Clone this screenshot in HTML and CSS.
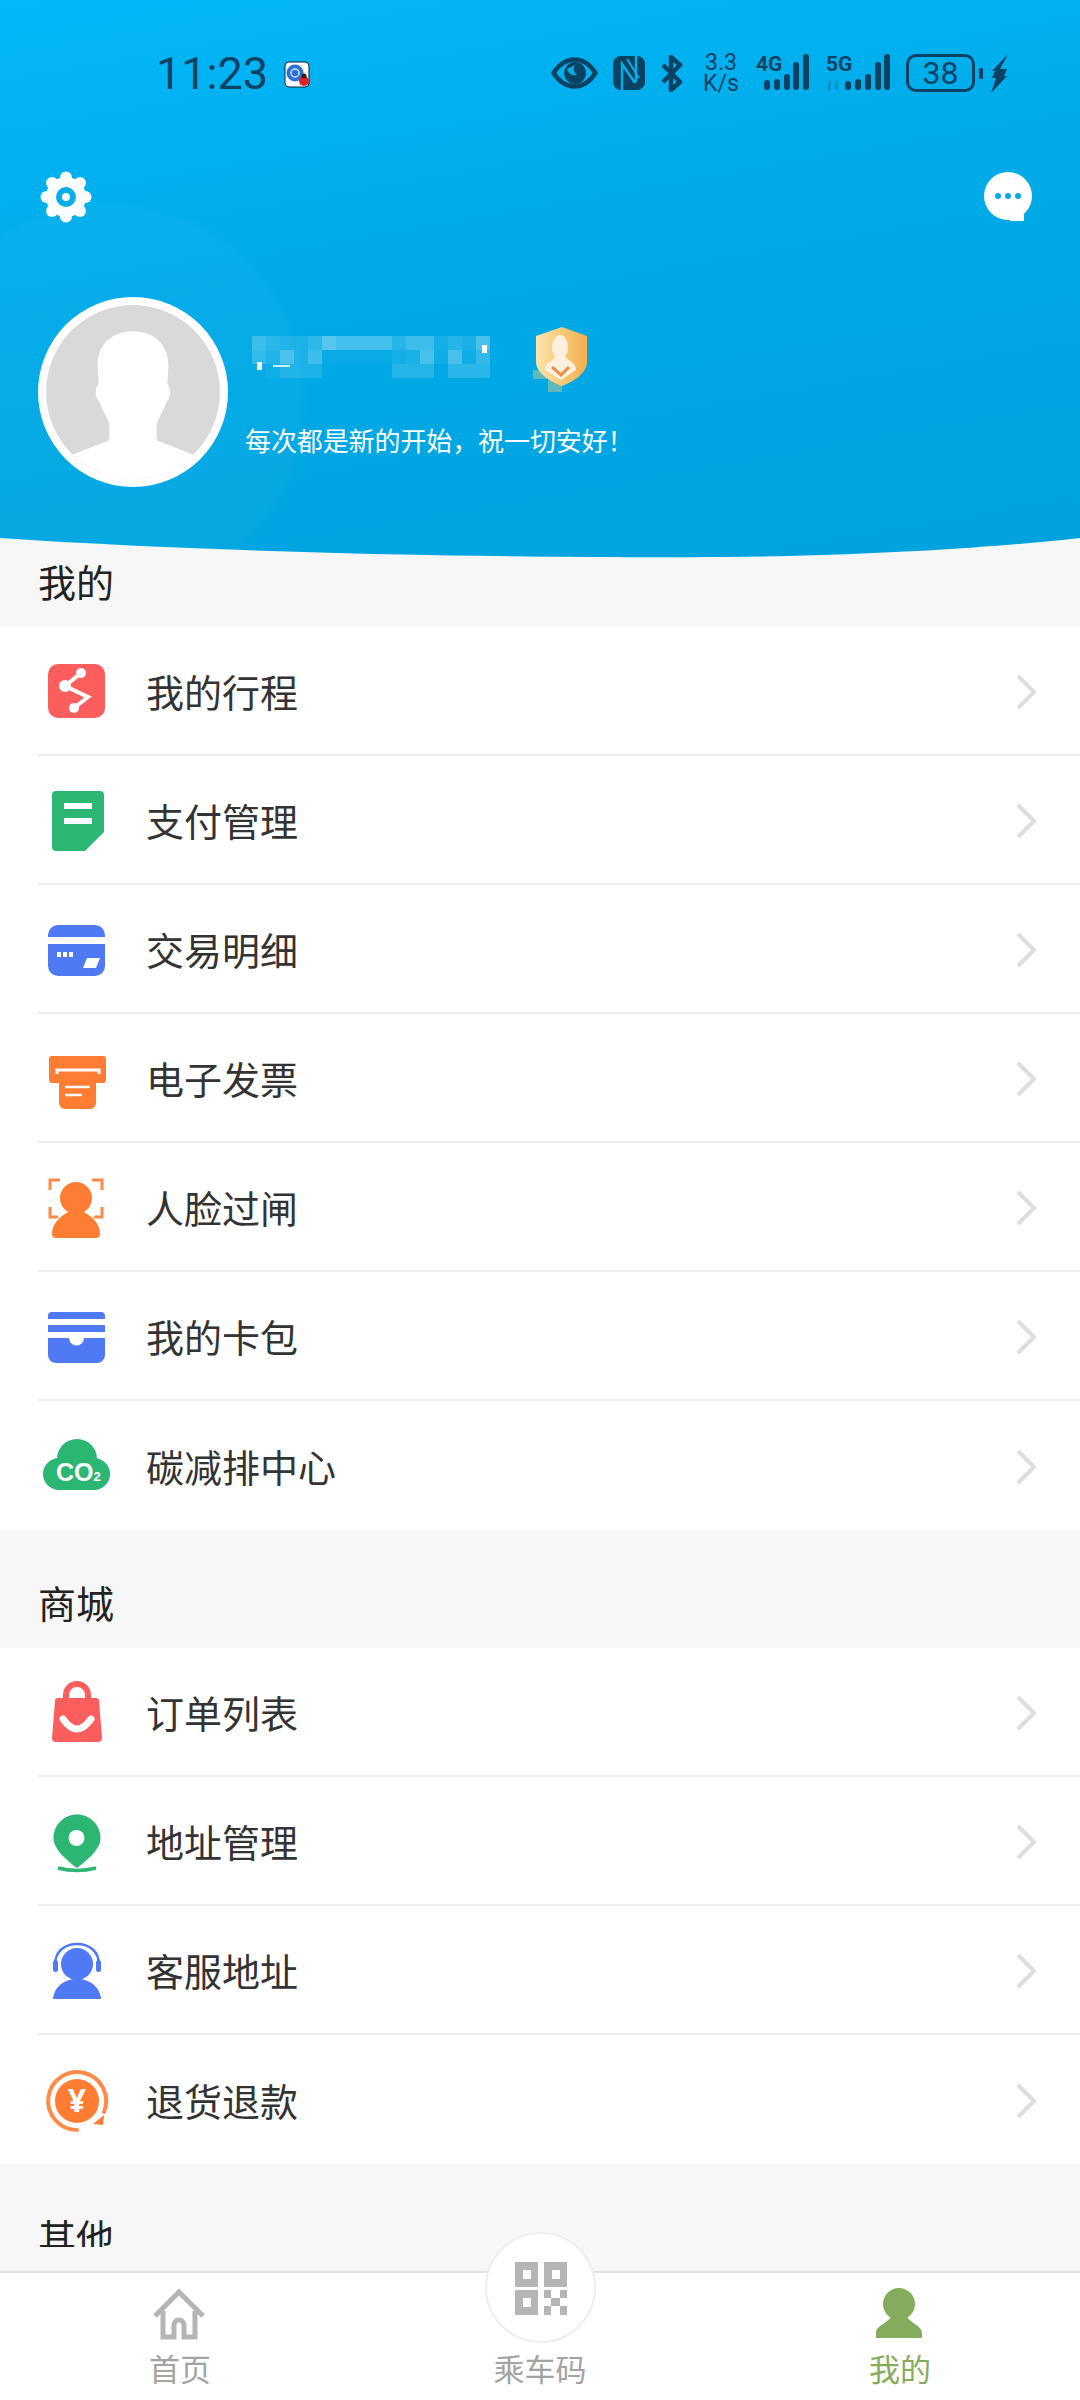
FILE: index.html
```html
<!DOCTYPE html>
<html lang="zh-CN">
<head>
  <meta charset="UTF-8">
  <title>我的</title>
  <link rel="stylesheet" href="styles.css">
</head>
<body>

  <svg class="defs" width="0" height="0">
    <symbol id="chevron" viewBox="0 0 24 38">
      <polyline points="4,3 20,19 4,35" fill="none" stroke="#dedede" stroke-width="4"/>
    </symbol>
  </svg>

  <header class="hero">
    <div class="status">
      <div class="status-left">
        <span class="clock">11:23</span>
        <svg class="app-dot" width="28" height="28" viewBox="0 0 28 28">
          <rect x="2" y="2" width="24" height="25" rx="4" fill="#fff" stroke="#123" stroke-width="1"/>
          <circle cx="12" cy="13" r="8.5" fill="#2f6fd8"/>
          <circle cx="12" cy="13" r="4" fill="none" stroke="#cfe0fa" stroke-width="1.5"/>
          <circle cx="21" cy="21" r="5" fill="#d8232a"/>
          <circle cx="21" cy="16" r="2.5" fill="#3a1a10"/>
        </svg>
      </div>
      <div class="status-right">
        <svg width="47" height="32" viewBox="0 0 47 32">
          <path d="M2.5 16C9 6 16 2.5 23.5 2.5S38 6 44.500 16C38 26 31 29.500 23.500 29.500S9 26 2.500 16Z" fill="none" stroke="#0a4264" stroke-width="4.500"/>
          <circle cx="24" cy="16" r="11" fill="#0a4264"/>
          <path d="M16 12a8 8 0 0 0 10 6a7 7 0 0 1-2-10z" fill="#04aee9"/>
        </svg>
        <svg width="32" height="34" viewBox="0 0 32 34">
          <rect width="32" height="34" rx="8" fill="#0a4264"/>
          <path d="M9 34V8L22 27M23 0V26" fill="none" stroke="#04aee9" stroke-width="2.400"/>
          <path d="M14 3L26 22" fill="none" stroke="#04aee9" stroke-width="2"/>
        </svg>
        <svg width="23" height="37" viewBox="0 0 23 37">
          <path d="M3 10L20 27L11 35V2L20 10L3 27" fill="none" stroke="#0a4264" stroke-width="4.500" stroke-linejoin="round"/>
        </svg>
        <div class="speed"><span>3.3</span><span>K/s</span></div>
        <svg class="signal" width="55" height="38" viewBox="0 0 55 38">
          <text class="net" x="0" y="17">4G</text>
          <rect x="8" y="26" width="6" height="10" rx="3" class="dark"/>
          <rect x="18" y="25" width="6" height="11" rx="3" class="dark"/>
          <rect x="28" y="20" width="6" height="16" rx="3" class="dark"/>
          <rect x="37" y="8" width="6" height="28" rx="3" class="dark"/>
          <rect x="47" y="0" width="6" height="36" rx="3" class="dark"/>
        </svg>
        <svg class="signal" width="66" height="38" viewBox="0 0 66 38">
          <text class="net" x="0" y="17">5G</text>
          <rect x="2" y="27" width="3" height="9" fill="#0a4264" opacity=".25"/>
          <rect x="9" y="27" width="3" height="9" fill="#0a4264" opacity=".25"/>
          <rect x="19" y="27" width="6" height="9" rx="3" class="dark"/>
          <rect x="29" y="25" width="6" height="11" rx="3" class="dark"/>
          <rect x="39" y="20" width="6" height="16" rx="3" class="dark"/>
          <rect x="49" y="8" width="6" height="28" rx="3" class="dark"/>
          <rect x="58" y="0" width="6" height="36" rx="3" class="dark"/>
        </svg>
        <div class="battery">38</div>
        <div class="battery-nub"></div>
        <svg class="bolt" width="17" height="39" viewBox="0 0 17 39">
          <polygon points="17,0 9,15 16,15 13,22 16,22 0,39 5,24 1,24 4,17 1,17" class="dark"/>
        </svg>
      </div>
    </div>

    <div class="toolbar">
      <svg width="52" height="52" viewBox="0 0 52 52">
        <g class="wh">
          <circle cx="26" cy="26" r="20"/>
          <circle cx="26" cy="6.500" r="6"/>
          <circle cx="26" cy="45.500" r="6"/>
          <circle cx="6.500" cy="26" r="6"/>
          <circle cx="45.500" cy="26" r="6"/>
          <circle cx="12" cy="12" r="6"/>
          <circle cx="40" cy="12" r="6"/>
          <circle cx="12" cy="40" r="6"/>
          <circle cx="40" cy="40" r="6"/>
        </g>
        <circle cx="26" cy="26" r="7" fill="none" stroke="#04aeea" stroke-width="6"/>
      </svg>
      <svg width="48" height="50" viewBox="0 0 48 50">
        <circle class="wh" cx="24" cy="24" r="24"/>
        <path class="wh" d="M26 38H40V49H26Z"/>
        <circle cx="14" cy="24" r="3" fill="#07a9e6"/>
        <circle cx="24" cy="24" r="3" fill="#07a9e6"/>
        <circle cx="34" cy="24" r="3" fill="#07a9e6"/>
      </svg>
    </div>

    <div class="profile">
      <svg class="avatar" width="190" height="190" viewBox="0 0 188 188">
        <clipPath id="face"><circle cx="94" cy="94" r="86"/></clipPath>
        <circle cx="94" cy="94" r="94" class="wh"/>
        <circle cx="94" cy="94" r="86" fill="#d9d9d9"/>
        <path clip-path="url(#face)" class="wh" d="M94 34C72 34 59 48 59 68C59 76 60 82 60 86C56 90 56 100 61 104C63 112 68 118 70 124C71 132 71 138 70 142L34 156L20 188H168L154 156L118 142C117 136 117 130 118 124C120 118 125 112 127 104C132 100 132 90 128 86C128 82 129 76 129 68C129 48 116 34 94 34Z"/>
      </svg>
      <div class="info">
        <div class="name-row">
          <!-- pixelated-out phone number -->
          <svg class="mosaic" width="260" height="56" viewBox="0 0 260 56">
            <g class="wh">
              <rect x="14" y="10" width="14" height="14" opacity=".22"/>
              <rect x="28" y="10" width="14" height="14" opacity=".14"/>
              <rect x="42" y="10" width="28" height="14" opacity=".1"/>
              <rect x="70" y="10" width="14" height="14" opacity=".18"/>
              <rect x="84" y="10" width="14" height="14" opacity=".34"/>
              <rect x="98" y="10" width="56" height="14" opacity=".26"/>
              <rect x="154" y="10" width="14" height="14" opacity=".14"/>
              <rect x="168" y="10" width="28" height="14" opacity=".24"/>
              <rect x="196" y="10" width="14" height="14" opacity=".08"/>
              <rect x="210" y="10" width="14" height="14" opacity=".14"/>
              <rect x="224" y="10" width="14" height="14" opacity=".1"/>
              <rect x="238" y="10" width="14" height="14" opacity=".28"/>
              <rect x="14" y="24" width="14" height="14" opacity=".18"/>
              <rect x="28" y="24" width="14" height="14" opacity=".1"/>
              <rect x="42" y="24" width="14" height="14" opacity=".28"/>
              <rect x="56" y="24" width="14" height="14" opacity=".1"/>
              <rect x="70" y="24" width="14" height="14" opacity=".24"/>
              <rect x="84" y="24" width="70" height="14" opacity=".03"/>
              <rect x="154" y="24" width="14" height="14" opacity=".08"/>
              <rect x="168" y="24" width="14" height="14" opacity=".1"/>
              <rect x="182" y="24" width="14" height="14" opacity=".28"/>
              <rect x="196" y="24" width="14" height="14" opacity=".05"/>
              <rect x="210" y="24" width="14" height="14" opacity=".28"/>
              <rect x="224" y="24" width="14" height="14" opacity=".06"/>
              <rect x="238" y="24" width="14" height="14" opacity=".2"/>
              <rect x="28" y="38" width="14" height="14" opacity=".04"/>
              <rect x="42" y="38" width="42" height="14" opacity=".11"/>
              <rect x="154" y="38" width="42" height="14" opacity=".14"/>
              <rect x="210" y="38" width="42" height="14" opacity=".16"/>
              <rect x="19" y="36" width="5" height="8"/>
              <rect x="35" y="39" width="17" height="2" opacity=".8"/>
              <rect x="244" y="19" width="5" height="8"/>
            </g>
          </svg>
          <svg class="shield" width="60" height="68" viewBox="0 0 60 68">
            <defs>
              <linearGradient id="gold" x1="0" y1="0" x2="1" y2="0">
                <stop offset="0" stop-color="#f9e6a9"/>
                <stop offset="1" stop-color="#f5ae4d"/>
              </linearGradient>
            </defs>
            <rect x="1" y="44" width="14" height="9" fill="#79bdae" opacity=".8"/>
            <rect x="16" y="53" width="14" height="13" fill="#79bdae" opacity=".8"/>
            <path d="M30 1L55 10V36C55 47 41 56 30 60C19 56 4 47 4 36V10Z" fill="url(#gold)"/>
            <ellipse cx="28" cy="21" rx="8" ry="12" fill="#fdf0df"/>
            <path d="M13 44C13 36 22 35 24 30H33C35 35 44 36 44 44L29 54Z" fill="#fdf0df"/>
            <path d="M20 41L29 49L37 41" fill="none" stroke="#f08a45" stroke-width="3"/>
          </svg>
        </div>
        <p class="motto">每次都是新的开始，祝一切安好！</p>
      </div>
    </div>
  </header>

  <main class="content">
    <h2 class="section-title first"><span>我的</span></h2>
    <ul class="list">
      <li class="row">
        <svg class="row-icon" viewBox="0 0 70 70">
          <rect x="6" y="8" width="57" height="54" rx="10" class="red"/>
          <polyline points="39,17 23,30 46,41 32,52" fill="none" stroke="#fff" stroke-width="4"/>
          <g class="wh"><circle cx="39" cy="17" r="5"/><circle cx="23" cy="30" r="6"/><circle cx="32" cy="52" r="5"/></g>
        </svg>
        <span class="row-label">我的行程</span>
        <svg class="chevron"><use href="#chevron"/></svg>
      </li>
      <li class="row">
        <svg class="row-icon" viewBox="0 0 70 70">
          <path class="green" d="M14 6H58a4 4 0 0 1 4 4V47L43 66H14a4 4 0 0 1-4-4V10a4 4 0 0 1 4-4Z"/>
          <rect class="wh" x="22" y="18" width="28" height="6"/>
          <rect class="wh" x="22" y="33" width="28" height="6"/>
        </svg>
        <span class="row-label">支付管理</span>
        <svg class="chevron"><use href="#chevron"/></svg>
      </li>
      <li class="row">
        <svg class="row-icon" viewBox="0 0 70 70">
          <path class="blue" d="M17 11H53a10 10 0 0 1 10 10V23H6V21a10 10 0 0 1 10-10Z"/>
          <path class="blue" d="M6 30H63V52a10 10 0 0 1-10 10H16a10 10 0 0 1-10-10Z"/>
          <g class="wh">
            <rect x="15" y="38" width="4" height="5"/><rect x="21" y="38" width="4" height="5"/><rect x="27" y="38" width="4" height="5"/>
            <polygon points="45,44 58,44 54,54 41,54"/>
          </g>
        </svg>
        <span class="row-label">交易明细</span>
        <svg class="chevron"><use href="#chevron"/></svg>
      </li>
      <li class="row">
        <svg class="row-icon" viewBox="0 0 70 70">
          <path class="orange" d="M10 13H61a3 3 0 0 1 3 3V37a3 3 0 0 1-3 3H54V60a6 6 0 0 1-6 6H23a6 6 0 0 1-6-6V40H10a3 3 0 0 1-3-3V16a3 3 0 0 1 3-3Z"/>
          <path d="M15 31V27H57V31" fill="none" stroke="#fff" stroke-width="3"/>
          <path d="M23 44H48M23 52H40" fill="none" stroke="#fff" stroke-width="2.500"/>
        </svg>
        <span class="row-label">电子发票</span>
        <svg class="chevron"><use href="#chevron"/></svg>
      </li>
      <li class="row">
        <svg class="row-icon" viewBox="0 0 70 70">
          <circle class="orange" cx="34" cy="26" r="16"/>
          <path class="orange" d="M10 62C10 52 17 45 26 40H42C51 45 58 52 58 62A4 4 0 0 1 54 66H14A4 4 0 0 1 10 62Z"/>
          <path d="M8 18V8H18M50 8H60V18M8 35V45H16M60 35V45H52" fill="none" stroke="#ff8a4a" stroke-width="3"/>
        </svg>
        <span class="row-label">人脸过闸</span>
        <svg class="chevron"><use href="#chevron"/></svg>
      </li>
      <li class="row">
        <svg class="row-icon" viewBox="0 0 70 70">
          <path class="blue" d="M10 11H59a4 4 0 0 1 4 4V18H6V15a4 4 0 0 1 4-4Z"/>
          <rect class="blue" x="6" y="24" width="57" height="7"/>
          <path class="blue" d="M6 37H27a7.500 7.500 0 0 0 15 0H63V54a8 8 0 0 1-8 8H14a8 8 0 0 1-8-8Z"/>
        </svg>
        <span class="row-label">我的卡包</span>
        <svg class="chevron"><use href="#chevron"/></svg>
      </li>
      <li class="row">
        <svg class="row-icon" viewBox="0 0 70 70">
          <g class="green">
            <circle cx="35" cy="28" r="20"/>
            <circle cx="17" cy="43" r="16"/>
            <circle cx="52" cy="43" r="16"/>
            <rect x="17" y="35" width="35" height="24"/>
          </g>
          <text class="co2" x="14" y="50">CO<tspan class="co2-sub">2</tspan></text>
        </svg>
        <span class="row-label">碳减排中心</span>
        <svg class="chevron"><use href="#chevron"/></svg>
      </li>
    </ul>

    <h2 class="section-title"><span>商城</span></h2>
    <ul class="list">
      <li class="row">
        <svg class="row-icon" viewBox="0 0 70 70">
          <path d="M24 24V18a11 11 0 0 1 22 0V24" fill="none" stroke="#fc5e5e" stroke-width="6"/>
          <path class="red" d="M16 21H54a3 3 0 0 1 3 3L60 61a4 4 0 0 1-4 4H14a4 4 0 0 1-4-4L13 24a3 3 0 0 1 3-3Z"/>
          <path d="M21 42Q35 62 49 42" fill="none" stroke="#fff" stroke-width="7" stroke-linecap="round"/>
        </svg>
        <span class="row-label">订单列表</span>
        <svg class="chevron"><use href="#chevron"/></svg>
      </li>
      <li class="row">
        <svg class="row-icon" viewBox="0 0 70 70">
          <path class="green" d="M35 8.500C48 8.500 58.500 19 58.500 32C58.500 44 44 55 35 62C26 55 11.500 44 11.500 32C11.500 19 22 8.500 35 8.500Z"/>
          <circle class="wh" cx="34.500" cy="32" r="8"/>
          <path d="M16 62Q35 67 54 62" fill="none" stroke="#2bb673" stroke-width="3.500"/>
        </svg>
        <span class="row-label">地址管理</span>
        <svg class="chevron"><use href="#chevron"/></svg>
      </li>
      <li class="row">
        <svg class="row-icon" viewBox="0 0 70 70">
          <path d="M13 30C13 16 23 9 35 9S57 16 57 30" fill="none" stroke="#5079f5" stroke-width="2.500"/>
          <circle class="blue" cx="35" cy="29" r="16"/>
          <rect class="blue" x="11" y="25" width="5" height="12" rx="2.500"/>
          <rect class="blue" x="54" y="25" width="5" height="12" rx="2.500"/>
          <path class="blue" d="M11 64C12 52 22 44 35 44S58 52 59 64Z"/>
        </svg>
        <span class="row-label">客服地址</span>
        <svg class="chevron"><use href="#chevron"/></svg>
      </li>
      <li class="row">
        <svg class="row-icon" viewBox="0 0 70 70">
          <circle class="orange" cx="35" cy="36" r="22"/>
          <path d="M35 65A29 29 0 1 1 62 47" fill="none" stroke="#ff8a4a" stroke-width="4" stroke-linecap="round"/>
          <polygon class="orange" points="62,50 61,60 51,59"/>
          <text class="yen" x="35" y="47">¥</text>
        </svg>
        <span class="row-label">退货退款</span>
        <svg class="chevron"><use href="#chevron"/></svg>
      </li>
    </ul>

    <h2 class="section-title cut"><span>其他</span></h2>
  </main>

  <nav class="tabs">
    <div class="tab">
      <svg class="tab-icon" width="60" height="54" viewBox="0 0 60 54">
        <path d="M5 29L29 5L53 29" fill="none" stroke="#b5b5b5" stroke-width="5"/>
        <path d="M13 24V50H24V38a5 5 0 0 1 10 0V50H45V24" fill="none" stroke="#b5b5b5" stroke-width="5"/>
      </svg>
      <span class="tab-label">首页</span>
    </div>
    <div class="tab">
      <div class="qr-button">
        <svg width="56" height="56" viewBox="0 0 56 56">
          <g fill="#b5b5b5">
            <rect x="2" y="2" width="23" height="25"/>
            <rect x="31" y="2" width="23" height="25"/>
            <rect x="2" y="30" width="23" height="25"/>
            <rect x="31" y="30" width="7" height="8"/>
            <rect x="47" y="30" width="7" height="8"/>
            <rect x="38" y="38" width="9" height="8"/>
            <rect x="31" y="46" width="7" height="9"/>
            <rect x="47" y="46" width="7" height="9"/>
          </g>
          <g class="wh">
            <rect x="10" y="10" width="8" height="9"/>
            <rect x="39" y="10" width="8" height="9"/>
            <rect x="10" y="38" width="8" height="9"/>
          </g>
        </svg>
      </div>
      <span class="tab-label">乘车码</span>
    </div>
    <div class="tab active">
      <svg class="tab-icon" width="60" height="54" viewBox="0 0 60 54">
        <g fill="#85ab5c">
          <ellipse cx="29" cy="17" rx="16" ry="16"/>
          <path d="M6 51V46C6 38 20 36 22 27H36C38 36 52 38 52 46V51Z"/>
        </g>
      </svg>
      <span class="tab-label">我的</span>
    </div>
  </nav>

</body>
</html>
```

FILE: styles.css
```css
* {
  box-sizing: border-box;
}
html, body {
  margin: 0;
  padding: 0;
}
body {
  width: 1080px;
  height: 2400px;
  overflow: hidden;
  display: flex;
  flex-direction: column;
  background: #f7f7f7;
  font-family: "Noto Sans CJK SC", "Noto Sans", sans-serif;
}
.defs {
  position: absolute;
}
.wh { fill: #fff; }
.dark { fill: #0a4264; }
.red { fill: #fc5e5e; }
.green { fill: #2bb673; }
.blue { fill: #5079f5; }
.orange { fill: #ff7d33; }

/* blue header */
.hero {
  flex: none;
  height: 558px;
  margin-bottom: -8px;
  background:
    radial-gradient(circle at 110px 400px, rgba(255, 255, 255, .025) 0 190px, transparent 200px),
    linear-gradient(170deg, #02b8f8 0%, #00abe8 42%, #00a2dd 100%);
  clip-path: path("M0 0H1080V538C980 549 850 556 720 557C560 558 250 555 0 538Z");
}
.status {
  height: 146px;
  padding-left: 156px;
  padding-right: 72px;
  display: flex;
  align-items: center;
  justify-content: space-between;
}
.status-left {
  display: flex;
  align-items: center;
  gap: 15px;
}
.clock {
  font-family: Roboto, sans-serif;
  font-size: 45px;
  color: #0a4264;
}
.app-dot {
  margin-top: 1px;
}
.status-right {
  display: flex;
  align-items: center;
  gap: 15px;
}
.signal {
  overflow: visible;
}
.speed {
  width: 36px;
  display: flex;
  flex-direction: column;
  align-items: center;
  margin: 0 2px 0 5px;
  font-family: Roboto, sans-serif;
  font-size: 23px;
  line-height: 21px;
  color: #0a4264;
}
.net {
  font-family: Roboto, sans-serif;
  font-weight: 700;
  font-size: 21px;
  fill: #0a4264;
}
.battery {
  width: 69px;
  height: 38px;
  margin-left: -1px;
  border: 3px solid #0a4264;
  border-radius: 10px;
  display: flex;
  align-items: center;
  justify-content: center;
  font-family: Roboto, sans-serif;
  font-size: 32px;
  color: #0a4264;
}
.battery-nub {
  width: 4px;
  height: 11px;
  margin-left: -11px;
  background: #0a4264;
  border-radius: 1px;
}
.bolt {
  margin-left: -7px;
}

.toolbar {
  height: 102px;
  padding: 0 48px 0 40px;
  display: flex;
  align-items: center;
  justify-content: space-between;
}

.profile {
  margin-top: 49px;
  padding-left: 38px;
  display: flex;
  align-items: flex-start;
}
.avatar {
  flex: none;
}
.info {
  margin-top: 29px;
  margin-left: 10px;
}
.name-row {
  height: 60px;
  display: flex;
  align-items: flex-start;
}
.shield {
  margin-left: 34px;
}
.motto {
  margin: 37px 0 0 7px;
  font-size: 26px;
  letter-spacing: -.1px;
  line-height: 34px;
  color: #fff;
}

/* lists */
.content {
  flex: 1;
  min-height: 0;
  overflow: hidden;
}
.section-title {
  margin: 0;
  height: 118px;
  padding: 53px 0 0 38px;
  font-size: 38px;
  font-weight: 400;
  line-height: 38px;
  color: #222;
}
.section-title span {
  display: block;
}
.section-title.first {
  height: 77px;
  padding-top: 12px;
}
/* the tab bar eats the bottom of this heading in the app */
.section-title.cut span {
  height: 30px;
  overflow: hidden;
}
.list {
  margin: 0;
  padding: 0;
  list-style: none;
  background: #fff;
}
.row {
  height: 129px;
  margin-left: 38px;
  display: flex;
  align-items: center;
  border-bottom: 2px solid #eeeeee;
}
.row:last-child {
  border-bottom: 0;
}
.row-icon {
  flex: none;
  width: 70px;
  height: 70px;
  margin-left: 4px;
}
.row-label {
  margin-left: 34px;
  font-size: 38px;
  color: #333;
}
.chevron {
  width: 24px;
  height: 38px;
  margin-top: 2px;
  margin-left: auto;
  margin-right: 42px;
}
.co2 {
  font-family: "Liberation Sans", sans-serif;
  font-weight: 700;
  font-size: 25px;
  fill: #fff;
}
.co2-sub {
  font-size: 13px;
}
.yen {
  font-family: "Noto Sans", sans-serif;
  font-weight: 700;
  font-size: 32px;
  text-anchor: middle;
  fill: #fff;
}

/* bottom tabs */
.tabs {
  flex: none;
  height: 129px;
  display: flex;
  background: #fff;
  border-top: 2px solid #e2e2e2;
}
.tab {
  position: relative;
  flex: 1;
  display: flex;
  flex-direction: column;
  align-items: center;
  justify-content: flex-end;
  padding-bottom: 15px;
}
.tab-icon {
  position: absolute;
  top: 14px;
  left: 150px;
}
.tab-label {
  font-size: 31px;
  line-height: 34px;
  color: #a3a3a3;
}
.tab.active .tab-label {
  color: #85ab5c;
}
.qr-button {
  position: absolute;
  top: -41px;
  left: 125px;
  width: 111px;
  height: 111px;
  border: 2px solid #eeeeee;
  border-radius: 50%;
  background: #fff;
  display: flex;
  align-items: center;
  justify-content: center;
}
```
